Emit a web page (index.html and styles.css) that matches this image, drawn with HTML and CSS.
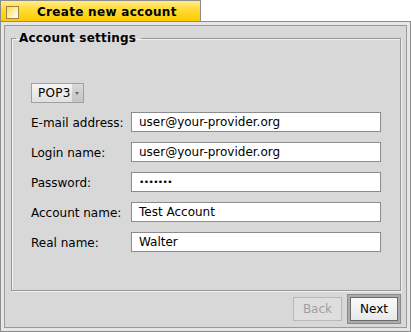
FILE: index.html
```html
<!DOCTYPE html>
<html>
<head>
<meta charset="utf-8">
<link rel="stylesheet" href="styles.css">
</head>
<body>
<div class="tab">
  <span class="close"></span>
  <span class="title">Create new account</span>
</div>
<div class="window">
  <div class="content">
    <fieldset class="box">
      <legend>Account settings</legend>
      <div class="popup"><span class="popup-label">POP3</span><span class="popup-arrow"></span></div>
      <div class="form">
        <label>E-mail address:</label><div class="input">user@your-provider.org</div>
        <label>Login name:</label><div class="input">user@your-provider.org</div>
        <label>Password:</label><div class="input pw">•••••••</div>
        <label>Account name:</label><div class="input">Test Account</div>
        <label>Real name:</label><div class="input">Walter</div>
      </div>
    </fieldset>
    <div class="buttons">
      <div class="btn disabled">Back</div>
      <div class="default-frame"><div class="btn">Next</div></div>
    </div>
  </div>
</div>
</body>
</html>
```

FILE: styles.css
```css
* { box-sizing: border-box; }
html, body { margin: 0; padding: 0; background: #ffffff; }
body {
  width: 411px;
  height: 332px;
  font-family: "DejaVu Sans", sans-serif;
  font-size: 12px;
  color: #000;
  overflow: hidden;
}
.tab {
  width: 201px;
  height: 21px;
  border: 1px solid #8c8c8c;
  border-bottom: none;
  background: linear-gradient(#ffed8a, #ffda30 45%, #ffcb00);
  display: flex;
  align-items: center;
  padding-left: 5px;
}
.close {
  width: 13px;
  height: 13px;
  margin-top: 2px;
  border: 1px solid #9a8646;
  background: linear-gradient(135deg, #ffd94a, #fff6cc 70%, #ffffff);
  flex: none;
}
.title {
  margin-left: 18px;
  margin-top: 2px;
  font-weight: bold;
  font-size: 12px;
  letter-spacing: 0.3px;
  color: #000;
}
.window {
  width: 411px;
  height: 311px;
  border: 1px solid #8c8c8c;
  background: #e6e6e6;
  padding: 3px;
}
.content {
  height: 100%;
  border: 1px solid #9a9a9a;
  background: #d8d8d8;
  display: flex;
  flex-direction: column;
}
.box {
  margin: 5px 5px 0 6px;
  height: 260px;
  padding: 38px 19px 0 19px;
  border: 1px solid #989898;
  box-shadow: 1px 1px 0 #f0f0f0, inset 1px 1px 0 #f0f0f0;
  min-width: 0;
}
.box legend {
  margin-left: -15px;
  padding: 0 5px 0 3px;
  font-weight: bold;
  line-height: 14px;
  letter-spacing: 0.2px;
}
.popup {
  width: 53px;
  height: 20px;
  border: 1px solid #a0a0a0;
  display: flex;
  background: linear-gradient(#f4f4f4, #e0e0e0);
  margin-bottom: 9px;
}
.popup-label {
  flex: 1;
  padding-left: 6px;
  line-height: 18px;
  letter-spacing: 0.3px;
}
.popup-arrow {
  width: 11px;
  background: linear-gradient(#d8d8d8, #c4c4c4);
  position: relative;
}
.popup-arrow::after {
  content: "";
  position: absolute;
  left: 3px;
  top: 8px;
  border-left: 2.5px solid transparent;
  border-right: 2.5px solid transparent;
  border-top: 3px solid #6a6a6a;
}
.form {
  display: grid;
  grid-template-columns: 100px 250px;
  grid-auto-rows: 20px;
  row-gap: 10px;
  align-items: center;
}
.form label {
  line-height: 20px;
  padding-top: 1px;
}
.input {
  height: 20px;
  border: 1px solid #8c8c8c;
  background: #fff;
  padding-left: 7px;
  line-height: 18px;
  white-space: nowrap;
}
.input.pw { letter-spacing: -0.6px; font-size: 9px; }
.buttons {
  display: flex;
  justify-content: flex-end;
  align-items: center;
  gap: 5px;
  margin-top: 3px;
  padding-right: 5px;
}
.btn {
  height: 24px;
  line-height: 22px;
  padding: 0 9px;
  border: 1px solid #6a6a6a;
  background: linear-gradient(#fafafa, #e8e8e8);
  text-align: center;
  min-width: 47px;
}
.btn.disabled {
  border-color: #b8b8b8;
  background: #dedede;
  color: #a0a0a0;
  min-width: 49px;
}
.default-frame {
  border: 1px solid #8a8a8a;
  background: #ababab;
  padding: 2px;
}
```
